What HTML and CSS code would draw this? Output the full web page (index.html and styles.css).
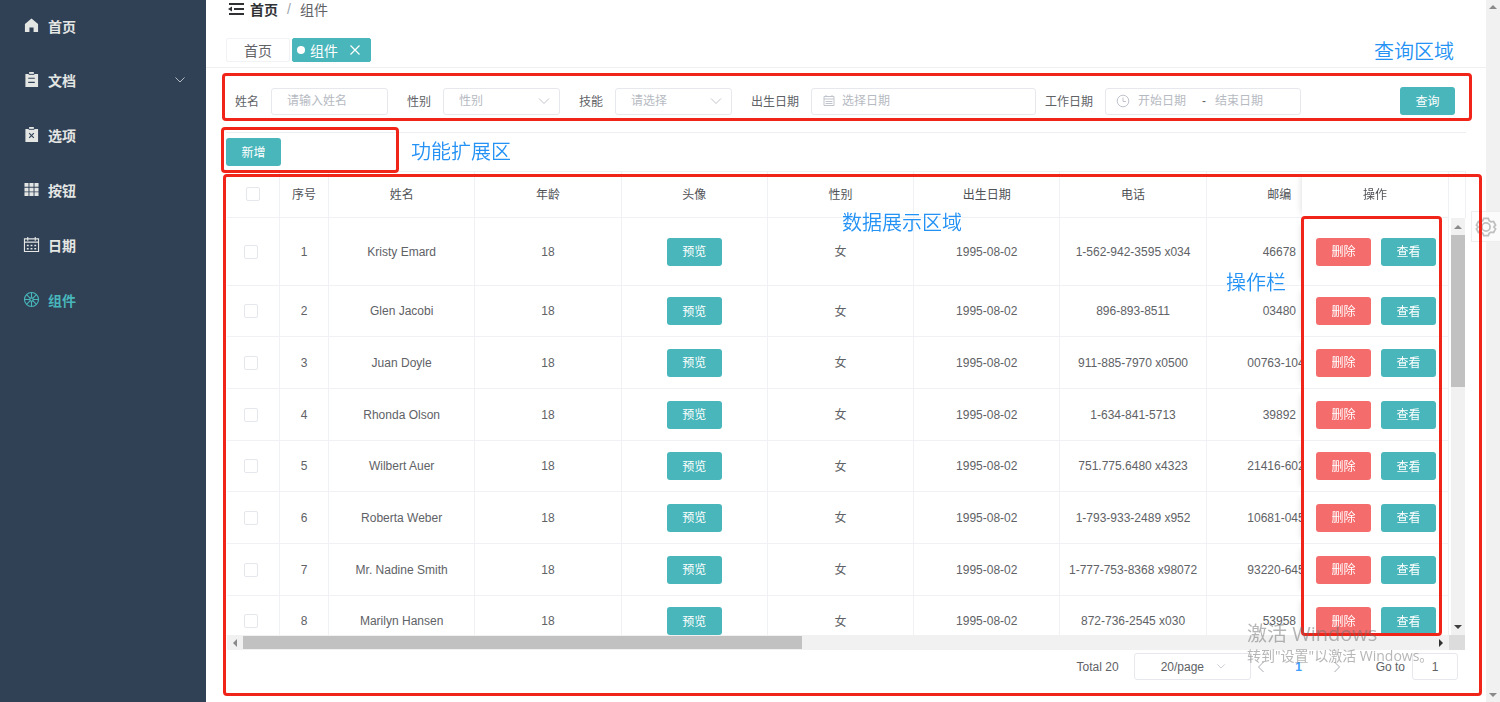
FILE: index.html
```html
<!DOCTYPE html>
<html lang="zh-CN">
<head>
<meta charset="utf-8">
<title>组件</title>
<link rel="stylesheet" href="styles.css">
</head>
<body>
<div class="app">
  <nav class="sidebar">
    <a class="menu-item" href="#">
      <svg class="menu-icon" viewBox="0 0 16 16"><path fill="currentColor" d="M8 .5 1 6.500V15h4.800v-5h4.400v5H15V6.500z"/></svg>
      <span>首页</span>
    </a>
    <a class="menu-item" href="#">
      <svg class="menu-icon" viewBox="0 0 16 16"><path fill="currentColor" fill-rule="evenodd" d="M5.500 0h5v2H15v14H1.500V2h4zM4.500 6v1.200h7V6zm0 4.500v1.200h7v-1.200z"/><path stroke="#304156" d="M5 2.500h6"/></svg>
      <span>文档</span>
      <svg class="menu-arrow" viewBox="0 0 10 10"><path d="M.5 2.500 5 7l4.500-4.500" fill="none" stroke="currentColor"/></svg>
    </a>
    <a class="menu-item" href="#">
      <svg class="menu-icon" viewBox="0 0 16 16"><path fill="currentColor" d="M5.500 0h5v2H15v14H1.500V2h4z"/><path stroke="#304156" d="M5 2.500h6"/><path stroke="#304156" stroke-width="1.200" d="m5.500 6.500 5 5m0-5-5 5"/></svg>
      <span>选项</span>
    </a>
    <a class="menu-item" href="#">
      <svg class="menu-icon" viewBox="0 0 16 16"><path fill="currentColor" d="M.5 1h4.300v4H.5zm5.300 0h4.400v4H5.800zm5.400 0h4.300v4h-4.300zM.5 6h4.300v4H.5zm5.300 0h4.400v4H5.800zm5.400 0h4.300v4h-4.300zM.5 11h4.300v4H.5zm5.300 0h4.400v4H5.800zm5.400 0h4.300v4h-4.300z"/></svg>
      <span>按钮</span>
    </a>
    <a class="menu-item" href="#">
      <svg class="menu-icon" viewBox="0 0 16 16"><path fill="none" stroke="currentColor" stroke-width="1.200" d="M.5 2h15v13.500H.5zM.5 5.500h15M4 0v4M12 0v4"/><path stroke="currentColor" stroke-width="1.500" stroke-dasharray="2 2" d="M3 9h10M3 12.500h10"/></svg>
      <span>日期</span>
    </a>
    <a class="menu-item active" href="#">
      <svg class="menu-icon" viewBox="0 0 16 16"><g fill="none" stroke="currentColor" stroke-width="1.200"><circle cx="8" cy="8" r="7.500"/><circle cx="8" cy="8" r="1.800"/><path d="M8 .5v5.700M8 9.800v5.700M.5 8h5.700M9.800 8h5.700M2.700 2.700l4 4M9.300 9.300l4 4M13.300 2.700l-4 4M6.700 9.300l-4 4"/></g></svg>
      <span>组件</span>
    </a>
  </nav>

  <main class="main">
    <header class="navbar">
      <button class="fold" type="button" aria-label="收起菜单">
        <svg viewBox="0 0 16 14"><path d="M1 2h15M6 7h10M1 12h15" stroke="#303133" stroke-width="2"/><path d="M0 7l4-2.500v5z" fill="#303133"/></svg>
      </button>
      <a class="crumb-home" href="#">首页</a>
      <span class="crumb-sep">/</span>
      <span class="crumb-current">组件</span>
    </header>

    <div class="tabs">
      <a class="tab" href="#">首页</a>
      <a class="tab tab-active" href="#"><i class="dot"></i>组件<svg class="tab-close" viewBox="0 0 10 10"><path d="m.5.5 9 9m0-9-9 9" stroke="#fff" stroke-width="1.200"/></svg></a>
    </div>

    <form class="search">
      <div class="field">
        <label for="name">姓名</label>
        <input class="control" id="name" type="text" placeholder="请输入姓名">
      </div>
      <div class="field">
        <label for="sex">性别</label>
        <div class="control-wrap">
          <select class="control" id="sex"><option>性别</option></select>
          <svg class="caret" viewBox="0 0 12 12"><path d="M1 3.500 6 8.500l5-5" fill="none" stroke="#c0c4cc"/></svg>
        </div>
      </div>
      <div class="field">
        <label for="skill">技能</label>
        <div class="control-wrap">
          <select class="control" id="skill"><option>请选择</option></select>
          <svg class="caret" viewBox="0 0 12 12"><path d="M1 3.500 6 8.500l5-5" fill="none" stroke="#c0c4cc"/></svg>
        </div>
      </div>
      <div class="field field-birth">
        <label for="birth">出生日期</label>
        <div class="picker picker-birth">
          <svg class="picker-icon" viewBox="0 0 12 12"><path fill="none" stroke="#c0c4cc" d="M1 1.500h10v9H1zM1 4h10M3 0v2M9 0v2M2.500 6.500h7M2.500 8.500h7"/></svg>
          <input id="birth" type="text" placeholder="选择日期">
        </div>
      </div>
      <div class="field">
        <label for="work-start">工作日期</label>
        <div class="picker picker-range">
          <svg class="picker-icon" viewBox="0 0 12 12"><g fill="none" stroke="#c0c4cc"><circle cx="6" cy="6" r="5.800"/><path d="M6 2.500V6.500h3"/></g></svg>
          <input id="work-start" type="text" placeholder="开始日期">
          <span class="range-sep">-</span>
          <input type="text" placeholder="结束日期" aria-label="结束日期">
        </div>
      </div>
      <button class="btn btn-primary search-btn" type="button">查询</button>
    </form>

    <div class="toolbar"><button class="btn btn-primary" type="button">新增</button></div>

    <section class="grid">
      <div class="grid-view">
        <div class="grid-pane">
          <table class="table">
            <colgroup><col class="col-check"><col class="col-index"><col><col><col><col><col><col><col><col class="col-ops"></colgroup>
            <thead>
              <tr><th><input type="checkbox" aria-label="全选"></th><th>序号</th><th>姓名</th><th>年龄</th><th>头像</th><th>性别</th><th>出生日期</th><th>电话</th><th>邮编</th><th class="ops">操作</th></tr>
            </thead>
            <tbody>
              <tr><td class="check"><input type="checkbox" aria-label="选择 1"></td><td>1</td><td>Kristy Emard</td><td>18</td><td><button class="btn btn-primary" type="button">预览</button></td><td class="cjk">女</td><td>1995-08-02</td><td>1-562-942-3595 x034</td><td>46678</td><td class="ops"><div class="ops-row"><button class="btn btn-danger" type="button">删除</button><button class="btn btn-primary" type="button">查看</button></div></td></tr>
              <tr><td class="check"><input type="checkbox" aria-label="选择 2"></td><td>2</td><td>Glen Jacobi</td><td>18</td><td><button class="btn btn-primary" type="button">预览</button></td><td class="cjk">女</td><td>1995-08-02</td><td>896-893-8511</td><td>03480</td><td class="ops"><div class="ops-row"><button class="btn btn-danger" type="button">删除</button><button class="btn btn-primary" type="button">查看</button></div></td></tr>
              <tr><td class="check"><input type="checkbox" aria-label="选择 3"></td><td>3</td><td>Juan Doyle</td><td>18</td><td><button class="btn btn-primary" type="button">预览</button></td><td class="cjk">女</td><td>1995-08-02</td><td>911-885-7970 x0500</td><td>00763-1044</td><td class="ops"><div class="ops-row"><button class="btn btn-danger" type="button">删除</button><button class="btn btn-primary" type="button">查看</button></div></td></tr>
              <tr><td class="check"><input type="checkbox" aria-label="选择 4"></td><td>4</td><td>Rhonda Olson</td><td>18</td><td><button class="btn btn-primary" type="button">预览</button></td><td class="cjk">女</td><td>1995-08-02</td><td>1-634-841-5713</td><td>39892</td><td class="ops"><div class="ops-row"><button class="btn btn-danger" type="button">删除</button><button class="btn btn-primary" type="button">查看</button></div></td></tr>
              <tr><td class="check"><input type="checkbox" aria-label="选择 5"></td><td>5</td><td>Wilbert Auer</td><td>18</td><td><button class="btn btn-primary" type="button">预览</button></td><td class="cjk">女</td><td>1995-08-02</td><td>751.775.6480 x4323</td><td>21416-6020</td><td class="ops"><div class="ops-row"><button class="btn btn-danger" type="button">删除</button><button class="btn btn-primary" type="button">查看</button></div></td></tr>
              <tr><td class="check"><input type="checkbox" aria-label="选择 6"></td><td>6</td><td>Roberta Weber</td><td>18</td><td><button class="btn btn-primary" type="button">预览</button></td><td class="cjk">女</td><td>1995-08-02</td><td>1-793-933-2489 x952</td><td>10681-0450</td><td class="ops"><div class="ops-row"><button class="btn btn-danger" type="button">删除</button><button class="btn btn-primary" type="button">查看</button></div></td></tr>
              <tr><td class="check"><input type="checkbox" aria-label="选择 7"></td><td>7</td><td>Mr. Nadine Smith</td><td>18</td><td><button class="btn btn-primary" type="button">预览</button></td><td class="cjk">女</td><td>1995-08-02</td><td>1-777-753-8368 x98072</td><td>93220-6450</td><td class="ops"><div class="ops-row"><button class="btn btn-danger" type="button">删除</button><button class="btn btn-primary" type="button">查看</button></div></td></tr>
              <tr><td class="check"><input type="checkbox" aria-label="选择 8"></td><td>8</td><td>Marilyn Hansen</td><td>18</td><td><button class="btn btn-primary" type="button">预览</button></td><td class="cjk">女</td><td>1995-08-02</td><td>872-736-2545 x030</td><td>53958</td><td class="ops"><div class="ops-row"><button class="btn btn-danger" type="button">删除</button><button class="btn btn-primary" type="button">查看</button></div></td></tr>
            </tbody>
          </table>
        </div>
        <div class="gutter">
          <div class="gutter-head"></div>
          <div class="vbar">
            <svg class="bar-arrow" viewBox="0 0 8 8"><path fill="#8a8a8a" d="M0 6h8L4 2z"/></svg>
            <div class="vthumb"></div>
            <svg class="bar-arrow" viewBox="0 0 8 8"><path fill="#404040" d="M0 2h8L4 6z"/></svg>
          </div>
        </div>
      </div>
      <div class="hbar">
        <svg class="bar-arrow" viewBox="0 0 8 8"><path fill="#8a8a8a" d="M6 0v8L2 4z"/></svg>
        <div class="htrack"><div class="hthumb"></div></div>
        <svg class="bar-arrow" viewBox="0 0 8 8"><path fill="#303030" d="M2 0v8l4-4z"/></svg>
        <div class="corner"></div>
      </div>
      <footer class="pager">
        <span>Total 20</span>
        <div class="control-wrap size-wrap">
          <select class="control" aria-label="每页条数"><option>20/page</option></select>
          <svg class="size-caret" viewBox="0 0 12 12"><path d="M1.500 4 6 8.500 10.500 4" fill="none" stroke="#c0c4cc"/></svg>
        </div>
        <button class="page-btn" type="button" aria-label="上一页"><svg viewBox="0 0 12 12"><path d="M8.500 1 3.500 6l5 5" fill="none" stroke="#a8abb2"/></svg></button>
        <button class="page-btn page-current" type="button">1</button>
        <button class="page-btn" type="button" aria-label="下一页"><svg viewBox="0 0 12 12"><path d="m3.500 1 5 5-5 5" fill="none" stroke="#a8abb2"/></svg></button>
        <label class="goto" for="goto">Go to</label>
        <input class="control goto-input" id="goto" type="text" value="1">
      </footer>
    </section>
  </main>

  <div class="page-bar">
    <svg class="bar-arrow" viewBox="0 0 8 8"><path fill="#8a8a8a" d="M0 6h8L4 2z"/></svg>
    <svg class="bar-arrow" viewBox="0 0 8 8"><path fill="#8a8a8a" d="M0 2h8L4 6z"/></svg>
  </div>

  <button class="settings" type="button" aria-label="设置">
    <svg viewBox="0 0 22 22"><g fill="none" stroke="#c0c0c0" stroke-width="2"><circle cx="11" cy="11" r="4.500"/><path d="M8.500 1.500h5l1 2.600 2 1.200 2.800-.4 2.200 4-1.800 2.100 1.800 2.100-2.200 4-2.800-.4-2 1.200-1 2.600h-5l-1-2.600-2-1.200-2.800.4-2.200-4L2.300 11 .5 8.900l2.200-4 2.800.4 2-1.200z"/></g></svg>
  </button>

  <div class="mark mark-search"></div>
  <div class="mark mark-tools"></div>
  <div class="mark mark-grid"></div>
  <div class="mark mark-ops"></div>
  <div class="note note-search">查询区域</div>
  <div class="note note-tools">功能扩展区</div>
  <div class="note note-grid">数据展示区域</div>
  <div class="note note-ops">操作栏</div>
  <div class="activate"><div class="activate-title">激活 Windows</div><div>转到"设置"以激活 Windows。</div></div>
</div>
</body>
</html>
```
FILE: styles.css
```css
* { box-sizing: border-box; }
body {
  margin: 0;
  font: 12px "Liberation Sans", "Noto Sans CJK SC", sans-serif;
  color: #606266;
  background: #fff;
}
a { color: inherit; text-decoration: none; }
button, input, select { font: inherit; color: inherit; margin: 0; }
svg { display: block; flex: none; overflow: visible; }

.app { position: relative; display: flex; height: 100vh; overflow: hidden; }

.sidebar { flex: none; width: 206px; background: #304156; }
.menu-item {
  display: flex;
  align-items: center;
  height: 55px;
  padding: 0 21px 2px 24px;
  gap: 9px;
  font-size: 14px;
  font-weight: 700;
  color: #e4e6e4;
}
.menu-item:first-child { height: 53px; }
.menu-icon { width: 15px; height: 15px; }
.menu-arrow { width: 10px; height: 10px; margin-left: auto; color: #b4bcc6; }
.active { color: #48b6ba; }

.main { flex: 1; min-width: 0; display: flex; flex-direction: column; }
.navbar {
  display: flex;
  align-items: center;
  height: 20px;
  padding: 0 0 3px 22px;
  font-size: 14px;
}
.fold { width: 16px; padding: 0; border: 0; background: none; }
.crumb-home { margin-left: 6px; font-weight: 700; color: #303133; }
.crumb-sep { margin: 0 9px; color: #a0a4ac; }

.tabs {
  display: flex;
  gap: 2px;
  padding: 18px 20px 5px;
  border-bottom: 1px solid #f0f0f2;
}
.tab {
  display: flex;
  align-items: center;
  height: 24px;
  padding: 0 17px 1px;
  border: 1px solid #f0f2f5;
  border-radius: 2px;
  font-size: 14px;
}
.tab-active { padding: 0 10px 1px 4px; border-color: #48b6ba; background: #48b6ba; color: #fff; }
.dot { width: 8px; height: 8px; margin-right: 5px; border-radius: 50%; background: #fff; }
.tab-close { width: 10px; height: 10px; margin-left: 12px; }

.search {
  display: flex;
  align-items: center;
  margin: 0 20px;
  padding: 19px 11px 17px 9px;
  border-bottom: 1px solid #eceef2;
}
.field { display: flex; align-items: center; gap: 12px; margin-right: 19px; white-space: nowrap; }
.field label { padding-bottom: 2px; }
.field-birth { margin-right: 9px; }
.control-wrap { position: relative; }
.control, .picker {
  width: 117px;
  height: 27px;
  border: 1px solid #e6e8ed;
  border-radius: 3px;
  background: #fff;
  outline: 0;
}
.control { display: block; padding: 0 15px; appearance: none; }
select.control { color: #b6bac2; }
::placeholder { color: #b6bac2; opacity: 1; }
.caret { position: absolute; right: 10px; top: 7px; width: 12px; height: 12px; pointer-events: none; }
.picker { display: flex; align-items: center; padding: 0 11px; }
.picker input { width: 64px; padding: 0; border: 0; outline: 0; background: none; }
.picker-birth { width: 225px; }
.picker-birth input { flex: 1; }
.picker-range { width: 196px; }
.picker-icon { width: 12px; height: 12px; margin-right: 7px; }
.picker-range .picker-icon { margin-right: 9px; }
.range-sep { width: 13px; }
.search-btn { margin-left: auto; }

.btn {
  width: 55px;
  height: 28px;
  padding: 0 0 2px;
  border: 0;
  border-radius: 3px;
  color: #fff;
}
.btn-primary { background: #48b6ba; }
.btn-danger { background: #f56c6c; }
.toolbar { padding: 5px 20px; }

.grid { flex: 1; min-height: 0; display: flex; flex-direction: column; padding: 0 20px 22px 21px; }
.grid-view { flex: 1; min-height: 0; display: flex; }
.grid-pane { flex: 1; min-width: 0; overflow: hidden; }
.table {
  width: 100%;
  min-width: 1273px;
  table-layout: fixed;
  border-collapse: separate;
  border-spacing: 0;
  text-align: center;
}
.col-check { width: 53px; }
.col-index { width: 49px; }
.col-ops { width: 147px; }
.table th, .table td {
  height: 52px;
  padding: 0;
  border-right: 1px solid #eff1f5;
  border-bottom: 1px solid #eff1f5;
  background: #fff;
  white-space: nowrap;
}
.table th { height: 47px; padding-bottom: 2px; font-weight: 400; color: #505256; border-top: 1px solid #eff1f5; }
.table tbody tr:first-child td { height: 68px; }
.table tbody tr:nth-child(3n+2) td { height: 51px; }
.table td.check { padding-right: 4px; }
.table td.cjk { padding-bottom: 2px; }
.table .btn { display: block; margin: 0 auto; }
.table .ops { position: sticky; right: 0; box-shadow: -6px 0 6px -5px rgba(0, 0, 0, 0.12); }
.table .ops-row { display: flex; justify-content: center; gap: 10px; padding-left: 2px; }
.table .ops-row .btn { margin: 0; }
input[type="checkbox"] {
  display: block;
  width: 14px;
  height: 14px;
  margin: 0 auto;
  appearance: none;
  border: 1px solid #e4e7ec;
  border-radius: 2px;
  background: #fff;
}

.gutter { flex: none; width: 17px; display: flex; flex-direction: column; }
.gutter-head { height: 47px; border: solid #eff1f5; border-width: 1px 1px 0 0; }
.vbar {
  flex: 1;
  display: flex;
  flex-direction: column;
  align-items: center;
  width: 14px;
  margin-left: 2px;
  padding: 5px 0 4px;
  background: #f1f1f1;
}
.bar-arrow { width: 8px; height: 8px; }
.vthumb { width: 14px; height: 152px; margin: 4px 0 auto; background: #c1c1c1; }
.hbar { display: flex; align-items: center; height: 15px; margin-right: 1px; padding-left: 4px; background: #f1f1f1; }
.htrack { flex: 1; height: 13px; margin: 0 4px; }
.hthumb { width: 47%; height: 13px; background: #c1c1c1; }
.corner { width: 16px; height: 15px; margin-left: 4px; background: #dcdcdc; }

.pager { display: flex; align-items: center; justify-content: flex-end; padding: 3px 8px 0 0; }
.size-wrap { margin-left: 15px; }
.pager .control { padding-left: 26px; color: #606266; }
.size-caret { position: absolute; right: 25px; top: 8px; width: 10px; height: 10px; pointer-events: none; }
.page-btn { width: 38px; height: 27px; padding: 0; border: 0; background: none; }
.page-btn svg { width: 12px; height: 12px; margin: 0 auto; }
.size-wrap + .page-btn { margin-left: -9px; }
.page-current { font-weight: 700; color: #409eff; }
.goto { margin: 0 7px 0 20px; }
.pager .goto-input { width: 46px; padding: 0; text-align: center; }

.page-bar {
  flex: none;
  display: flex;
  flex-direction: column;
  justify-content: space-between;
  align-items: center;
  width: 14px;
  padding: 3px 0;
  background: #f1f1f1;
}

.settings {
  position: absolute;
  right: 0;
  top: 211px;
  width: 29px;
  height: 31px;
  padding: 0 0 0 4px;
  border: 1px solid #eee;
  border-right: 0;
  background: rgba(255, 255, 255, 0.7);
}
.settings svg { width: 20px; height: 20px; }

/* Annotations over the page */
.mark { position: absolute; border: 3px solid #f02418; border-radius: 4px; pointer-events: none; }
.mark-search { left: 222px; right: 28px; top: 73px; height: 48px; }
.mark-tools { left: 221px; width: 178px; top: 127px; height: 46px; }
.mark-grid { left: 223px; right: 18px; top: 174px; bottom: 6px; }
.mark-ops { right: 58px; width: 141px; top: 216px; bottom: 66px; }
.note { position: absolute; font-size: 20px; line-height: 24px; font-weight: 350; color: #2492f4; white-space: nowrap; }
.note-search { right: 46px; top: 40px; }
.note-tools { left: 411px; top: 140px; }
.note-grid { left: 842px; top: 211px; }
.note-ops { right: 214px; top: 271px; }
.activate {
  position: absolute;
  left: 1247px;
  bottom: 36px;
  font-family: "Open Sans", "Noto Sans CJK SC", sans-serif;
  font-size: 14px;
  line-height: 20px;
  color: rgba(110, 110, 110, 0.5);
  white-space: nowrap;
  pointer-events: none;
}
.activate-title { font-size: 20px; line-height: 24px; }
```
